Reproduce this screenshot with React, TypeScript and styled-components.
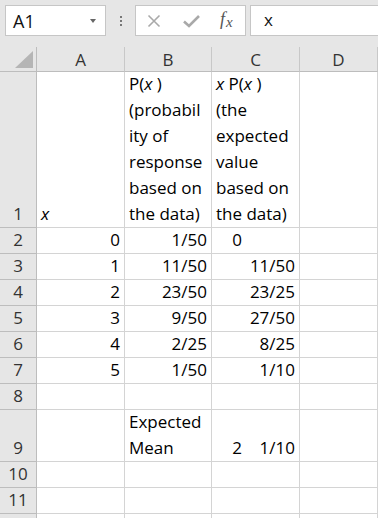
import styled, { createGlobalStyle } from "styled-components";

const GlobalStyle = createGlobalStyle`
  html, body {
    margin: 0;
    padding: 0;
    background: #ffffff;
  }
  body {
    width: 378px;
    height: 518px;
    overflow: hidden;
    font-family: "Open Sans", "Noto Sans", sans-serif;
  }
`;

const Page = styled.div`
  width: 378px;
  height: 518px;
  overflow: hidden;
  display: flex;
  flex-direction: column;
`;

const Toolbar = styled.div`
  height: 47px;
  flex: none;
  background: #e6e6e6;
  display: flex;
  align-items: flex-start;
  padding: 5px 0 0 5px;
  box-sizing: border-box;
`;

const Box = styled.div<{ $w?: number }>`
  height: 31px;
  box-sizing: border-box;
  background: #ffffff;
  border: 1px solid #c6c6c6;
  display: flex;
  align-items: center;
  flex: ${(p) => (p.$w ? "none" : "1")};
  width: ${(p) => (p.$w ? `${p.$w}px` : "auto")};
`;

const FormulaBox = styled(Box)`
  margin-left: 4px;
  border-right: none;
`;

const NameText = styled.span`
  font-size: 18px;
  color: #111;
  padding-left: 7px;
  flex: 1;
`;

const Caret = styled.span`
  width: 0;
  height: 0;
  border-left: 3.5px solid transparent;
  border-right: 3.5px solid transparent;
  border-top: 4px solid #666;
  margin-right: 9px;
  margin-top: 1px;
`;

const Dots = styled.div`
  width: 29px;
  height: 31px;
  display: flex;
  align-items: center;
  justify-content: center;
`;

const FxGroup = styled.div`
  display: flex;
  align-items: center;
  width: 100%;
  padding-left: 11px;
`;

const IconSlot = styled.span<{ $w: number }>`
  width: ${(p) => p.$w}px;
  display: flex;
  align-items: center;
`;

const Fx = styled.span`
  font-family: "Liberation Serif", "DejaVu Serif", serif;
  font-style: italic;
  font-size: 18px;
  color: #555;
  margin-top: -2px;
  small {
    font-size: 15px;
    position: relative;
    top: 2px;
    margin-left: 1px;
  }
`;

const FormulaText = styled.span`
  font-size: 17px;
  color: #111;
  padding-left: 13px;
  margin-top: -2px;
`;

const Sheet = styled.div`
  display: grid;
  grid-template-columns: 37px 88px 87px 88px 78px;
  grid-template-rows: 25px 156px repeat(7, 26px) 52px 26px 26px 26px;
  font-size: 17px;
  color: #000;
  line-height: 26px;
`;

const Corner = styled.div`
  background: #e6e6e6;
  border-right: 1px solid #bdbdbd;
  border-bottom: 1px solid #bdbdbd;
  box-sizing: border-box;
  display: flex;
  align-items: flex-end;
  justify-content: flex-end;
  padding: 0 3px 3px 0;
`;

const ColHead = styled.div`
  background: #e6e6e6;
  border-right: 1px solid #c8c8c8;
  border-bottom: 1px solid #bdbdbd;
  box-sizing: border-box;
  display: flex;
  align-items: center;
  justify-content: center;
  color: #333;
  padding-top: 2px;
`;

const RowHead = styled.div`
  background: #e6e6e6;
  border-right: 1px solid #bdbdbd;
  border-bottom: 1px solid #bdbdbd;
  box-sizing: border-box;
  display: flex;
  align-items: flex-end;
  justify-content: center;
  color: #333;
`;

const Cell = styled.div<{ $align?: "left" | "right" }>`
  border-right: 1px solid #d4d4d4;
  border-bottom: 1px solid #d4d4d4;
  box-sizing: border-box;
  display: flex;
  flex-direction: column;
  justify-content: flex-end;
  align-items: ${(p) => (p.$align === "right" ? "flex-end" : "flex-start")};
  padding: 0 4px;
  white-space: nowrap;
  overflow: hidden;
`;

const Mixed = styled.div`
  display: flex;
  justify-content: flex-end;
`;

const Frac = styled.span`
  width: 53px;
  text-align: right;
`;

const I = styled.i`
  font-style: italic;
`;

type Row = {
  n: number;
  a: string;
  b: string;
  c?: string;
};

const rows: Row[] = [
  { n: 2, a: "0", b: "1/50" },
  { n: 3, a: "1", b: "11/50", c: "11/50" },
  { n: 4, a: "2", b: "23/50", c: "23/25" },
  { n: 5, a: "3", b: "9/50", c: "27/50" },
  { n: 6, a: "4", b: "2/25", c: "8/25" },
  { n: 7, a: "5", b: "1/50", c: "1/10" },
];

function EmptyRow({ n }: { n?: number }) {
  return (
    <>
      <RowHead>{n}</RowHead>
      <Cell />
      <Cell />
      <Cell />
      <Cell />
    </>
  );
}

function App() {
  return (
    <Page>
      <GlobalStyle />
      <Toolbar>
        <Box $w={101}>
          <NameText>A1</NameText>
          <Caret />
        </Box>
        <Dots>
          <svg width="4" height="12" viewBox="0 0 4 12">
            <rect x="1" y="1" width="2" height="2" fill="#777" />
            <rect x="1" y="5" width="2" height="2" fill="#777" />
            <rect x="1" y="9" width="2" height="2" fill="#777" />
          </svg>
        </Dots>
        <Box $w={111}>
          <FxGroup>
            <IconSlot $w={36}>
              <svg width="14" height="14" viewBox="0 0 14 14">
                <path d="M1.5 1.5 L12.5 12.5 M12.5 1.5 L1.5 12.5" stroke="#a9a9a9" strokeWidth="1.6" fill="none" />
              </svg>
            </IconSlot>
            <IconSlot $w={37}>
              <svg width="17" height="14" viewBox="0 0 17 14">
                <path d="M1 7.5 L6 12 L16 2" stroke="#a9a9a9" strokeWidth="2.6" fill="none" />
              </svg>
            </IconSlot>
            <Fx>
              f<small>x</small>
            </Fx>
          </FxGroup>
        </Box>
        <FormulaBox>
          <FormulaText>x</FormulaText>
        </FormulaBox>
      </Toolbar>
      <Sheet>
        <Corner>
          <svg width="18" height="17" viewBox="0 0 18 17">
            <polygon points="18,0 18,17 0,17" fill="#b5b5b5" />
          </svg>
        </Corner>
        <ColHead>A</ColHead>
        <ColHead>B</ColHead>
        <ColHead>C</ColHead>
        <ColHead>D</ColHead>

        <RowHead>1</RowHead>
        <Cell>
          <span>
            <I>x</I>
          </span>
        </Cell>
        <Cell>
          <span>
            P(<I>x</I> )
          </span>
          <span>(probabil</span>
          <span>ity of</span>
          <span>response</span>
          <span>based on</span>
          <span>the data)</span>
        </Cell>
        <Cell>
          <span>
            <I>x</I> P(<I>x</I> )
          </span>
          <span>(the</span>
          <span>expected</span>
          <span>value</span>
          <span>based on</span>
          <span>the data)</span>
        </Cell>
        <Cell />

        {rows.map((r) => (
          <>
            <RowHead>{r.n}</RowHead>
            <Cell $align="right">{r.a}</Cell>
            <Cell $align="right">{r.b}</Cell>
            <Cell $align="right">
              {r.c ? (
                r.c
              ) : (
                <Mixed>
                  <span>0</span>
                  <Frac />
                </Mixed>
              )}
            </Cell>
            <Cell />
          </>
        ))}

        <EmptyRow n={8} />

        <RowHead>9</RowHead>
        <Cell />
        <Cell>
          <span>Expected</span>
          <span>Mean</span>
        </Cell>
        <Cell $align="right">
          <Mixed>
            <span>2</span>
            <Frac>1/10</Frac>
          </Mixed>
        </Cell>
        <Cell />

        <EmptyRow n={10} />
        <EmptyRow n={11} />
        <EmptyRow />
      </Sheet>
    </Page>
  );
}

export default App;
